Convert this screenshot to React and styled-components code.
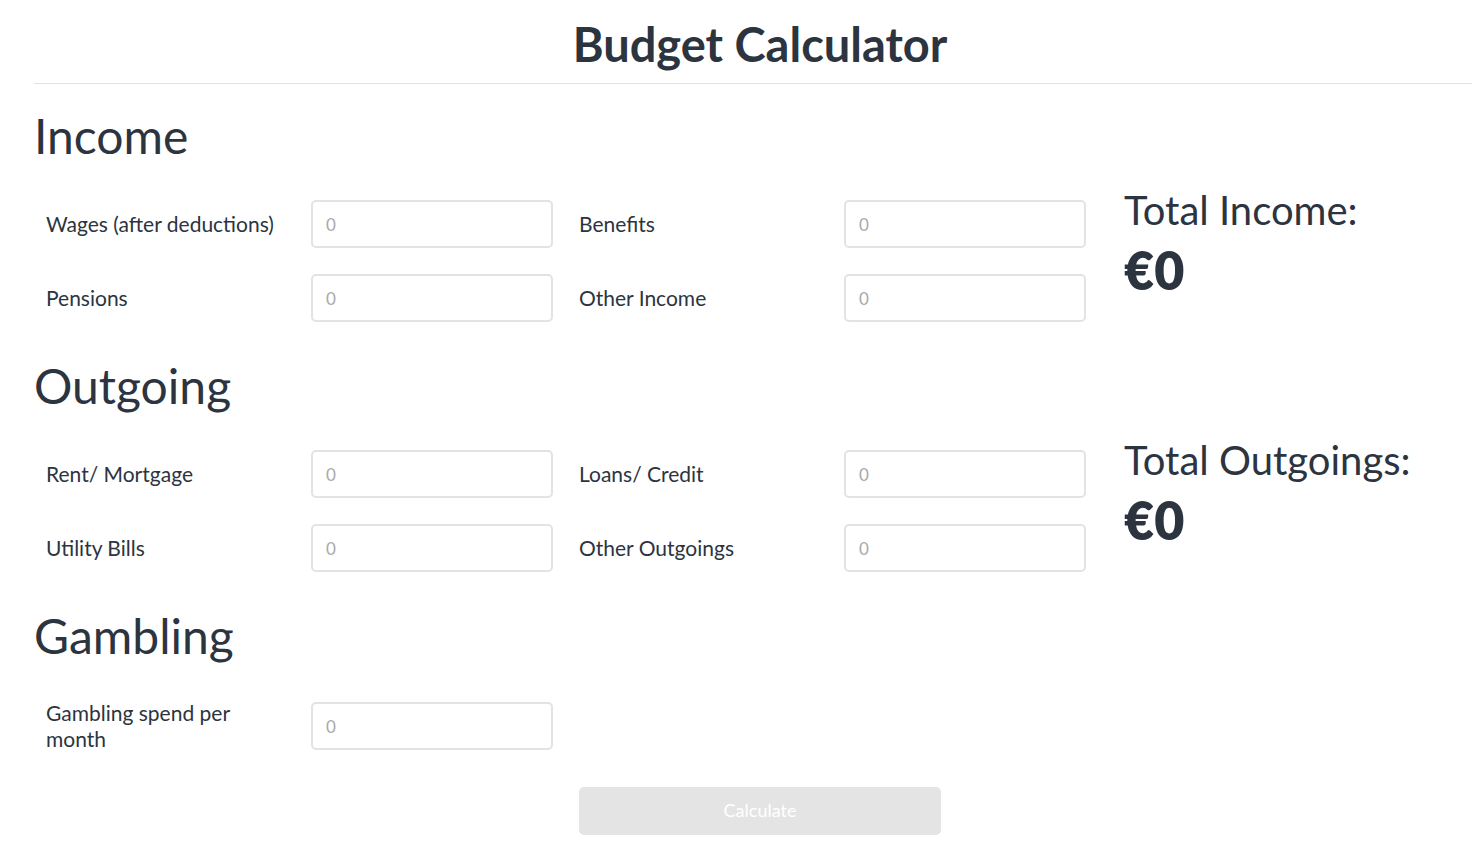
import styled, { createGlobalStyle } from "styled-components";

const Global = createGlobalStyle`
  body {
    margin: 0;
    overflow-x: hidden;
    background: #fff;
    font-family: Lato, "Open Sans", sans-serif;
    color: #2c3440;
  }
`;

const Page = styled.div`
  width: 1452px;
  margin-left: 34px;
  padding-bottom: 20px;
`;

const Header = styled.header`
  padding-top: 15px;
  border-bottom: 1px solid #e3e3e3;
  padding-bottom: 10px;
`;

const Title = styled.h1`
  margin: 0;
  text-align: center;
  font-size: 47px;
  line-height: 58px;
  font-weight: 700;
`;

const Section = styled.section`
  margin-top: ${(p) => p.$top || 34}px;
`;

const SectionTitle = styled.h2`
  margin: 0 0 34px;
  font-size: 48px;
  line-height: 60px;
  font-weight: 400;
`;

const Body = styled.div`
  display: flex;
  align-items: flex-start;
  gap: 38px;
`;

const Fields = styled.div`
  display: grid;
  grid-template-columns: repeat(2, 519px);
  column-gap: 14px;
  row-gap: 26px;
`;

const Field = styled.label`
  display: grid;
  grid-template-columns: 277px 242px;
  align-items: center;
`;

const LabelText = styled.span`
  padding: 0 12px;
  font-size: 21px;
  line-height: 26px;
  max-width: ${(p) => p.$max || 260}px;
`;

const Input = styled.input`
  box-sizing: border-box;
  height: 48px;
  width: 242px;
  border: 2px solid #e3e3e3;
  border-radius: 5px;
  padding: 0 13px;
  font-family: inherit;
  font-size: 17px;
  color: #2c3440;
  outline: none;

  &::placeholder {
    color: #a9a9a9;
  }
`;

const Totals = styled.div`
  margin-top: -14px;
`;

const TotalLabel = styled.div`
  font-size: 40px;
  line-height: 48px;
`;

const TotalValue = styled.div`
  margin-top: 5px;
  font-size: 52px;
  line-height: 1.2;
  font-weight: 800;
`;

const Actions = styled.div`
  display: flex;
  justify-content: center;
  margin-top: 35px;
`;

const Button = styled.button`
  width: 362px;
  height: 48px;
  border: none;
  border-radius: 5px;
  background: #e4e4e4;
  color: #fff;
  font-family: inherit;
  font-size: 18px;
  padding: 0 0 2px;
`;

const Row = ({ label, max }) => (
  <Field>
    <LabelText $max={max}>{label}</LabelText>
    <Input type="number" placeholder="0" />
  </Field>
);

const sections = [
  {
    title: "Income",
    fields: ["Wages (after deductions)", "Benefits", "Pensions", "Other Income"],
    total: "Total Income:",
  },
  {
    title: "Outgoing",
    fields: ["Rent/ Mortgage", "Loans/ Credit", "Utility Bills", "Other Outgoings"],
    total: "Total Outgoings:",
  },
];

export default function App() {
  return (
    <Page>
      <Global />
      <Header>
        <Title>Budget Calculator</Title>
      </Header>

      {sections.map((s, i) => (
        <Section key={s.title} $top={i === 0 ? 22 : 34}>
          <SectionTitle>{s.title}</SectionTitle>
          <Body>
            <Fields>
              {s.fields.map((f) => (
                <Row key={f} label={f} />
              ))}
            </Fields>
            <Totals>
              <TotalLabel>{s.total}</TotalLabel>
              <TotalValue>€0</TotalValue>
            </Totals>
          </Body>
        </Section>
      ))}

      <Section>
        <SectionTitle>Gambling</SectionTitle>
        <Fields>
          <Row label="Gambling spend per month" max={210} />
        </Fields>
      </Section>

      <Actions>
        <Button>Calculate</Button>
      </Actions>
    </Page>
  );
}
